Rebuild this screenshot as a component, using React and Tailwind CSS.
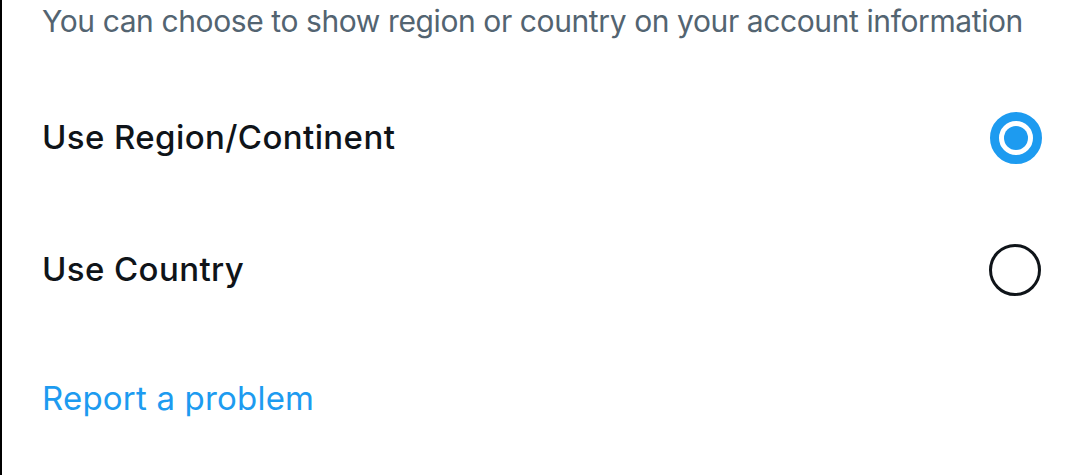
export default function App() {
  return (
    <div
      className="w-[1080px] h-[475px] bg-white border-l-2 border-black overflow-hidden"
      style={{ fontFamily: 'Inter, "Noto Sans", sans-serif' }}
    >
      <div className="h-[72px] pl-10 pt-[3px]">
        <p className="text-[30px] leading-[36px] text-[#536471] tracking-[-0.4px]">
          You can choose to show region or country on your account information
        </p>
      </div>

      <div className="h-[132px] flex items-center justify-between pl-10 pr-[38px]">
        <span className="text-[33px] font-medium text-[#0f1419] tracking-[0.4px]">Use Region/Continent</span>
        <div className="w-[52px] h-[52px] rounded-full border-[9px] border-[#1d9bf0] flex items-center justify-center">
          <div className="w-[24px] h-[24px] rounded-full bg-[#1d9bf0]" />
        </div>
      </div>

      <div className="h-[132px] flex items-center justify-between pl-10 pr-[39px]">
        <span className="text-[33px] font-medium text-[#0f1419] tracking-[0.4px]">Use Country</span>
        <div className="w-[52px] h-[52px] rounded-full border-[3px] border-[#0f1419]" />
      </div>

      <div className="h-[126px] flex items-center pl-10">
        <span className="text-[33px] text-[#1d9bf0] tracking-[0.2px]">Report a problem</span>
      </div>
    </div>
  )
}
